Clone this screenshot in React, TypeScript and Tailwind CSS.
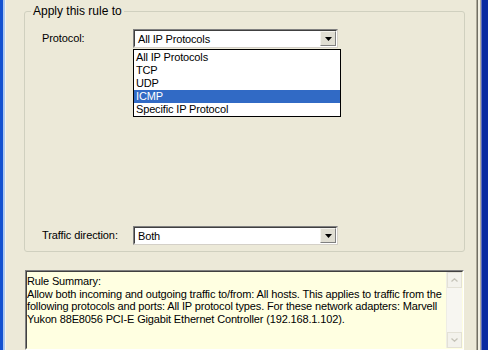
import React from "react";

const font = { fontFamily: '"Liberation Sans", Arial, sans-serif' };

function Arrow() {
  return (
    <svg width="7" height="4" viewBox="0 0 7 4">
      <path d="M0 0h7L3.5 4z" fill="#000" />
    </svg>
  );
}

function Combo({ value }: { value: string }) {
  return (
    <div className="w-[205px] h-[19px] flex bg-white border border-t-[#808080] border-l-[#808080] border-r-[#d4d0c8] border-b-[#d4d0c8]">
      <div className="flex-1 flex border border-t-[#404040] border-l-[#404040] border-r-white border-b-white">
        <div className="flex-1 pl-[3px] text-[11px] tracking-[-0.15px] leading-[16px] text-black">{value}</div>
        <div className="w-[16px] h-[15px] flex items-center justify-center bg-[#e0ded3] border border-t-[#f4f3ee] border-l-[#f4f3ee] border-r-[#808080] border-b-[#808080]">
          <Arrow />
        </div>
      </div>
    </div>
  );
}

export default function App() {
  const items = ["All IP Protocols", "TCP", "UDP", "ICMP", "Specific IP Protocol"];
  const lines = [
    "Rule Summary:",
    "Allow both incoming and outgoing traffic to/from: All hosts. This applies to traffic from the",
    "following protocols and ports: All IP protocol types. For these network adapters: Marvell",
    "Yukon 88E8056 PCI-E Gigabit Ethernet Controller (192.168.1.102).",
  ];
  return (
    <div className="w-[488px] h-[350px] flex overflow-hidden bg-[#ece9d8]" style={font}>
      {/* left frame */}
      <div className="w-[3px] shrink-0 bg-[#1250d0]" />
      <div className="w-[2px] shrink-0 bg-[#a9c6ee]" />
      <div className="w-[1px] shrink-0 bg-[#f5f4ee]" />

      {/* main */}
      <div className="flex-1 min-w-0 flex flex-col pl-[18px] pr-[11px] pt-[11px]">
        {/* group box */}
        <div className="relative h-[241px] border border-[#d0d0bf] rounded-[3px]">
          <div className="absolute left-[6px] -top-[8px] px-[2px] bg-[#ece9d8] text-[12px] leading-[14px] text-black">
            Apply this rule to
          </div>
          <div className="flex items-center pt-[17px] pl-[17px]">
            <div className="w-[91px] text-[11px] tracking-[-0.1px] text-black">Protocol:</div>
            <Combo value="All IP Protocols" />
          </div>
          <div className="flex items-center pt-[178px] pl-[17px]">
            <div className="w-[91px] text-[11px] tracking-[-0.1px] text-black">Traffic direction:</div>
            <Combo value="Both" />
          </div>

          {/* dropdown overlay */}
          <div className="absolute left-[108px] top-[37px] w-[208px] h-[68px] bg-white border border-black flex flex-col pt-[1px]">
            {items.map((it) => (
              <div
                key={it}
                className={
                  "h-[13px] pl-[2px] text-[11px] tracking-[-0.15px] leading-[13px] " +
                  (it === "ICMP" ? "bg-[#316ac5] text-white" : "text-black")
                }
              >
                {it}
              </div>
            ))}
          </div>
        </div>

        {/* summary */}
        <div className="mt-[18px] ml-[1px] mr-[1px] flex-1 min-w-0 flex bg-[#ffffe1] border border-t-[#808080] border-l-[#808080] border-r-white border-b-white">
          <div className="flex-1 min-w-0 flex border border-t-[#404040] border-l-[#404040] border-r-transparent border-b-transparent">
            <div className="flex-1 min-w-0 pt-[3px] text-[11px] tracking-[-0.15px] leading-[12.5px] text-black whitespace-nowrap overflow-hidden">
              {lines.map((l) => (
                <div key={l}>{l}</div>
              ))}
            </div>
            <div className="w-[16px] shrink-0 flex flex-col justify-between bg-[#f7f6f1] border-l border-[#eeede5]">
              <div className="h-[16px] flex items-center justify-center bg-[#f3f2ec] border border-[#e3e1d6]">
                <svg width="7" height="4" viewBox="0 0 7 4">
                  <path d="M0.5 3.5L3.5 0.8L6.5 3.5" stroke="#c5c3b8" fill="none" strokeWidth="1.3" />
                </svg>
              </div>
              <div className="h-[16px] flex items-center justify-center bg-[#f3f2ec] border border-[#e3e1d6]">
                <svg width="7" height="4" viewBox="0 0 7 4">
                  <path d="M0.5 0.5L3.5 3.2L6.5 0.5" stroke="#c5c3b8" fill="none" strokeWidth="1.3" />
                </svg>
              </div>
            </div>
          </div>
        </div>
      </div>

      {/* right frame */}
      <div className="w-[1px] shrink-0 bg-[#aca899]" />
      <div className="w-[1px] shrink-0 bg-[#716f64]" />
      <div className="w-[2px] shrink-0 bg-[#f1efe2]" />
      <div className="w-[1px] shrink-0 bg-[#aca899]" />
      <div className="w-[1px] shrink-0 bg-[#5d6cbe]" />
      <div className="w-[6px] shrink-0 bg-[#0a2aa0]" />
    </div>
  );
}
